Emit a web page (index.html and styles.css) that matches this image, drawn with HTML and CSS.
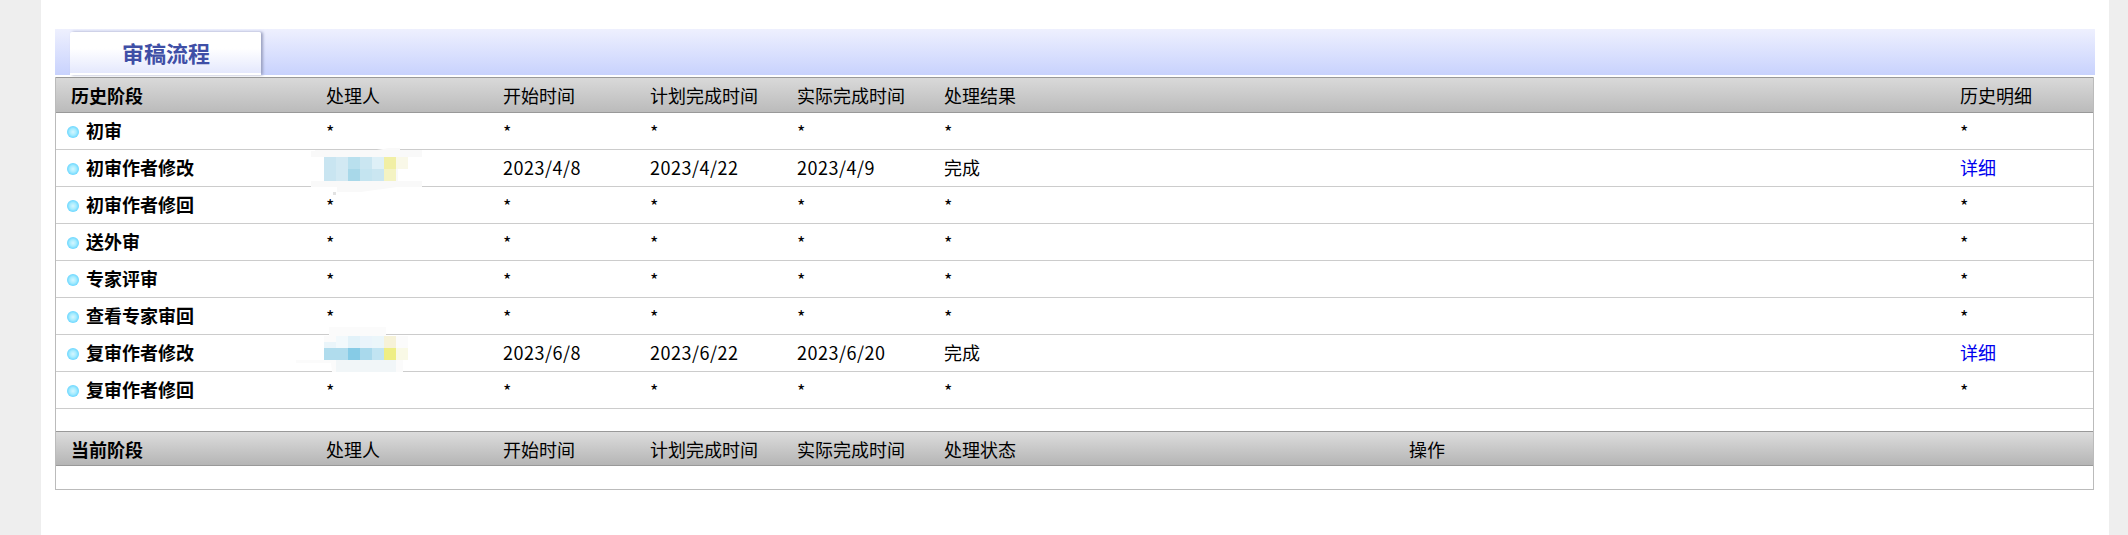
FILE: index.html
```html
<!DOCTYPE html>
<html lang="zh-CN">
<head>
<meta charset="utf-8">
<title>审稿流程</title>
<link rel="stylesheet" href="styles.css">
</head>
<body>
<main class="page">
  <div class="banner"><div class="tab">审稿流程</div></div>
  <div class="frame">
    <table class="grid">
      <colgroup><col class="c1"><col class="c2"><col class="c3"><col class="c3"><col class="c3"><col class="c6"><col class="c7"></colgroup>
      <thead>
        <tr><th class="stage">历史阶段</th><th>处理人</th><th>开始时间</th><th>计划完成时间</th><th>实际完成时间</th><th>处理结果</th><th>历史明细</th></tr>
      </thead>
      <tbody>
        <tr><td class="name"><span class="dot"></span>初审</td><td>*</td><td>*</td><td>*</td><td>*</td><td>*</td><td>*</td></tr>
        <tr><td class="name"><span class="dot"></span>初审作者修改</td>
          <td class="masked"><svg class="mask mask-a" width="115" height="50" viewBox="0 0 115 50" aria-hidden="true">
            <path d="M4 3H66L78 1H89V3H111V10H87V34H111V40H86L50 45H26V40H0V34H13V10H0V4H4Z" fill="#f9f9f9"/>
            <rect x="22" y="45" width="3" height="3" fill="#e2e2e2"/>
            <rect x="13" y="10" width="12" height="24" fill="#c9e5f1"/><rect x="25" y="10" width="12" height="24" fill="#d2e9f3"/>
            <rect x="37" y="10" width="12" height="12" fill="#b9e0ee"/><rect x="37" y="22" width="12" height="12" fill="#a8d8e9"/>
            <rect x="49" y="10" width="12" height="12" fill="#cae6f1"/><rect x="49" y="22" width="12" height="12" fill="#c4e4f0"/>
            <rect x="61" y="10" width="12" height="12" fill="#def0f7"/><rect x="61" y="22" width="12" height="12" fill="#cae6f1"/>
            <rect x="73" y="10" width="12" height="12" fill="#f1efa5"/><rect x="73" y="22" width="12" height="12" fill="#f4f3c3"/>
            <rect x="85" y="10" width="12" height="12" fill="#f9f8e8"/>
          </svg></td>
          <td class="txt date">2023/4/8</td><td class="txt date">2023/4/22</td><td class="txt date">2023/4/9</td><td class="txt">完成</td><td class="txt"><a class="link" href="#">详细</a></td></tr>
        <tr><td class="name"><span class="dot"></span>初审作者修回</td><td>*</td><td>*</td><td>*</td><td>*</td><td>*</td><td>*</td></tr>
        <tr><td class="name"><span class="dot"></span>送外审</td><td>*</td><td>*</td><td>*</td><td>*</td><td>*</td><td>*</td></tr>
        <tr><td class="name"><span class="dot"></span>专家评审</td><td>*</td><td>*</td><td>*</td><td>*</td><td>*</td><td>*</td></tr>
        <tr><td class="name"><span class="dot"></span>查看专家审回</td><td>*</td><td>*</td><td>*</td><td>*</td><td>*</td><td>*</td></tr>
        <tr><td class="name"><span class="dot"></span>复审作者修改</td>
          <td class="masked"><svg class="mask mask-b" width="125" height="50" viewBox="0 0 125 50" aria-hidden="true">
            <path d="M34 2H91V11H113V35H108V47H37L36 38H1V35H29V11H34Z" fill="#fbfbfb"/>
            <rect x="29" y="17" width="12" height="6" fill="#eaf5fa"/><rect x="41" y="11" width="12" height="12" fill="#f2f9fc"/>
            <rect x="53" y="11" width="12" height="12" fill="#e2f2f9"/><rect x="65" y="11" width="12" height="12" fill="#eaf4fb"/>
            <rect x="77" y="11" width="12" height="12" fill="#ebf6fa"/><rect x="89" y="11" width="12" height="12" fill="#f6f2d8"/>
            <rect x="29" y="23" width="24" height="12" fill="#b0dced"/><rect x="53" y="23" width="12" height="12" fill="#86cbe6"/>
            <rect x="65" y="23" width="12" height="12" fill="#a9d9ec"/><rect x="77" y="23" width="12" height="12" fill="#c1e4f2"/>
            <rect x="89" y="23" width="12" height="12" fill="#eeee85"/><rect x="101" y="23" width="12" height="12" fill="#f9f9e6"/>
            <rect x="41" y="35" width="60" height="12" fill="#f1f6f8"/>
          </svg></td>
          <td class="txt date">2023/6/8</td><td class="txt date">2023/6/22</td><td class="txt date">2023/6/20</td><td class="txt">完成</td><td class="txt"><a class="link" href="#">详细</a></td></tr>
        <tr><td class="name"><span class="dot"></span>复审作者修回</td><td>*</td><td>*</td><td>*</td><td>*</td><td>*</td><td>*</td></tr>
      </tbody>
    </table>
    <table class="grid current">
      <colgroup><col class="c1"><col class="c2"><col class="c3"><col class="c3"><col class="c3"><col class="c6b"><col class="c7b"></colgroup>
      <thead>
        <tr><th class="stage">当前阶段</th><th>处理人</th><th>开始时间</th><th>计划完成时间</th><th>实际完成时间</th><th>处理状态</th><th>操作</th></tr>
      </thead>
      <tbody>
        <tr class="empty"><td colspan="7"></td></tr>
      </tbody>
    </table>
  </div>
</main>
</body>
</html>
```
FILE: styles.css
```css
* { box-sizing: border-box; }
html, body { margin: 0; height: 100%; }
body {
  background: #eeeeee;
  font-family: "Noto Sans CJK SC", "Liberation Sans", sans-serif;
  font-size: 18px;
  color: #000;
  overflow: hidden;
}
.page {
  width: 2068px;
  height: 535px;
  margin-left: 41px;
  padding: 29px 14px 0;
  background: #fff;
}
.banner {
  height: 46px;
  padding: 3px 0 0 15px;
  background: linear-gradient(#eef0fe, #c8d2fd);
}
.tab {
  width: 191px;
  height: 43px;
  padding-left: 52px;
  line-height: 40px;
  font-size: 22px;
  font-weight: 700;
  color: #3f4fa6;
  background: linear-gradient(#ffffff 40%, #e4e8fd);
  border-radius: 2px 2px 0 0;
  border-bottom: 2px solid #fff;
  box-shadow: 2px 0 3px #9aa0c0;
}
.frame {
  width: 2039px;
  height: 413px;
  margin-top: 2px;
  border: 1px solid #bbbbbb;
  border-top: 0;
}
.grid {
  width: 100%;
  table-layout: fixed;
  border-collapse: separate;
  border-spacing: 0;
}
.c1 { width: 270px; }
.c2 { width: 177px; }
.c3 { width: 147px; }
.c6 { width: 1016px; }
.c7 { width: 133px; }
.c6b { width: 465px; }
.c7b { width: 684px; }
.grid th {
  height: 36px;
  padding: 0;
  text-align: left;
  font-weight: 400;
  background: linear-gradient(#d9d9d9, #bbbbbb);
  border-top: 1px solid #999999;
  border-bottom: 1px solid #999999;
}
.grid th.stage { padding-left: 15px; font-weight: 700; }
.grid td {
  height: 37px;
  padding: 0;
  border-bottom: 1px solid #cccccc;
}
.grid td.txt { padding-bottom: 2px; }
.grid td.name {
  padding: 0 0 2px 11px;
  font-weight: 700;
}
.grid td.date { letter-spacing: 0.5px; }
.dot {
  display: inline-block;
  width: 12px;
  height: 12px;
  margin-right: 7px;
  vertical-align: 0;
  border-radius: 50%;
  background: radial-gradient(circle closest-side, #d6f6ff 0, #a6ecff 55%, #6ad6ff 100%);
}
.masked { position: relative; }
.mask { position: absolute; display: block; }
.mask-a { left: -15px; top: -3px; }
.mask-b { left: -31px; top: -10px; }
.link { color: #0000ee; text-decoration: none; }
.current { margin-top: 22px; }
.current th { background: linear-gradient(#dcdcdc, #b5b5b5); height: 35px; }
.grid .empty td { height: 23px; border-bottom: 0; }
```
